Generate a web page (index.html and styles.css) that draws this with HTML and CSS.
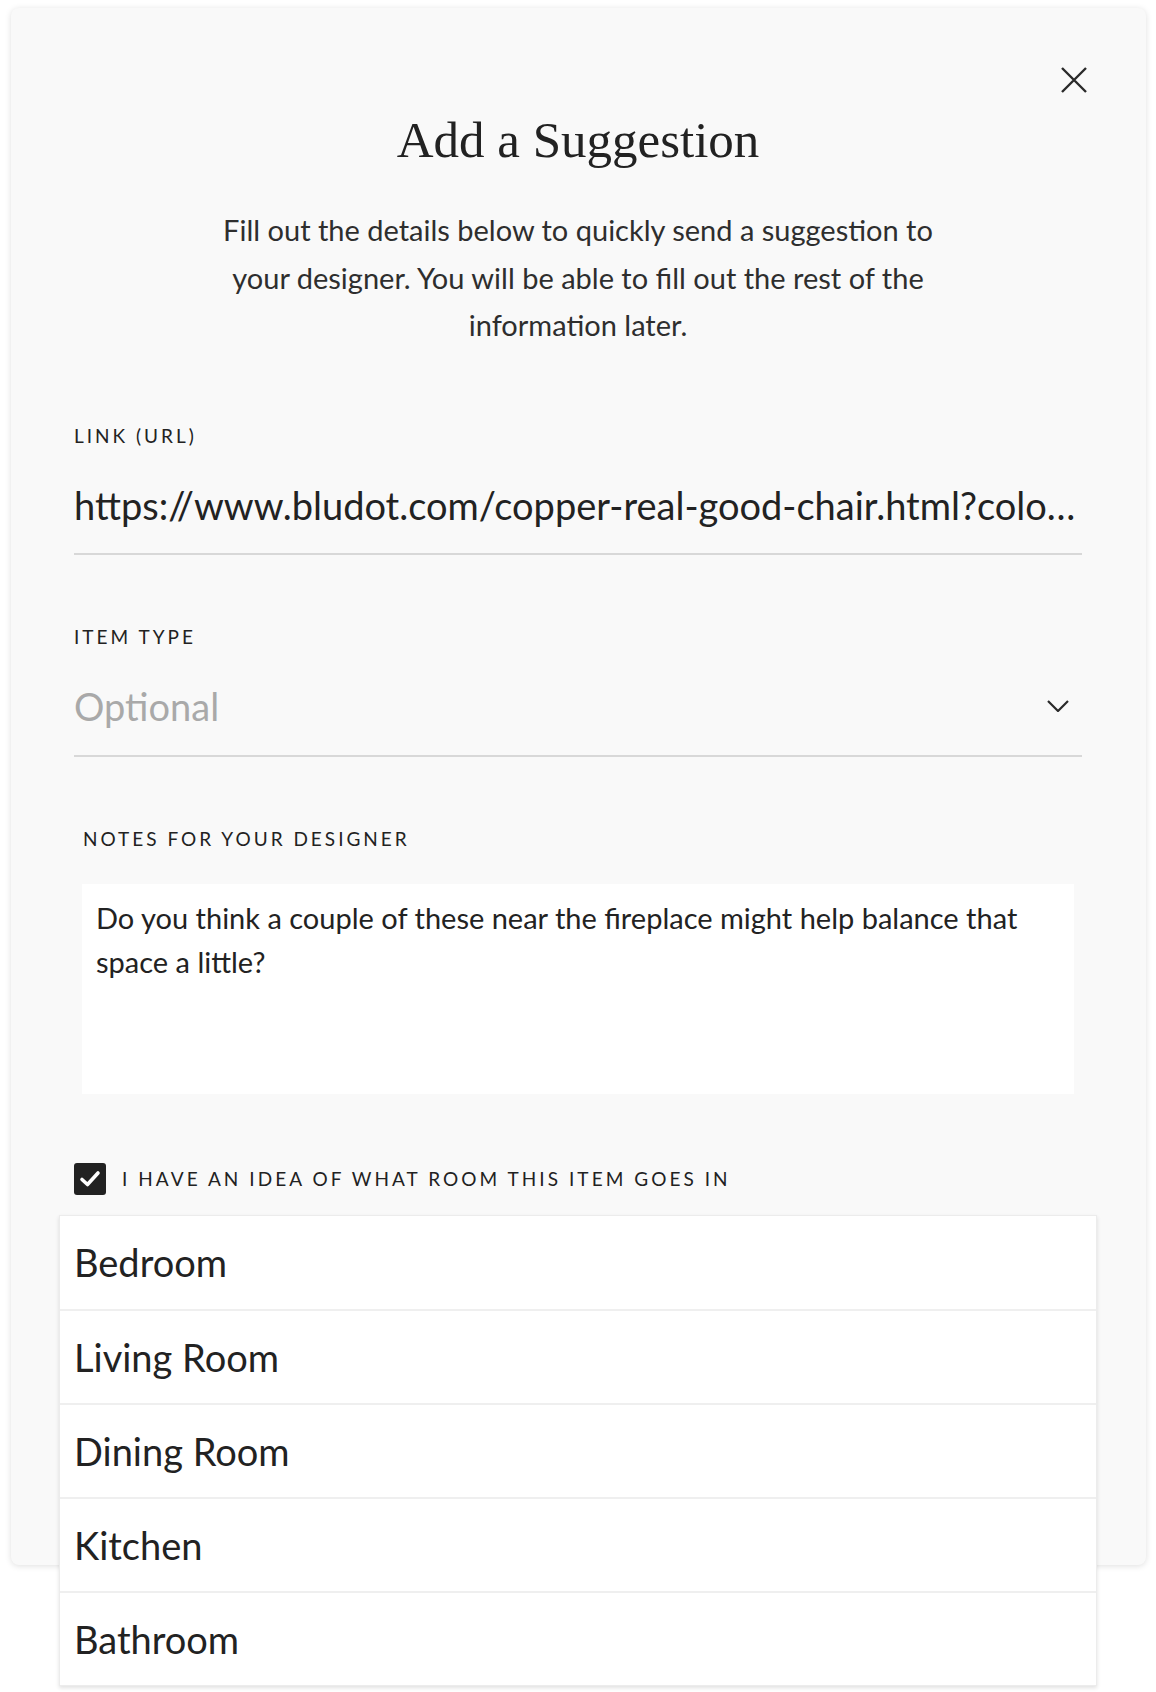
FILE: index.html
```html
<!DOCTYPE html>
<html lang="en">
<head>
<meta charset="utf-8">
<title>Add a Suggestion</title>
<link rel="stylesheet" href="styles.css">
</head>
<body>
<div class="modal">
  <button class="close" aria-label="Close">
    <svg width="26" height="26" viewBox="0 0 26 26"><path d="M1 1 L25 25 M25 1 L1 25" stroke="#2a2a2a" stroke-width="2.4" fill="none"/></svg>
  </button>
  <h1 class="title">Add a Suggestion</h1>
  <p class="intro">Fill out the details below to quickly send a suggestion to<br>your designer. You will be able to fill out the rest of the<br>information later.</p>

  <div class="field">
    <div class="label">Link (URL)</div>
    <div class="input">https://www.bludot.com/copper-real-good-chair.html?colo…</div>
  </div>

  <div class="field">
    <div class="label">Item Type</div>
    <div class="input select">
      <span class="placeholder">Optional</span>
      <svg class="chev" width="22" height="12" viewBox="0 0 22 12"><path d="M1 1 L11 11 L21 1" stroke="#2a2a2a" stroke-width="2.2" fill="none"/></svg>
    </div>
  </div>

  <div class="field notes">
    <div class="label">Notes for your designer</div>
    <div class="textarea">Do you think a couple of these near the fireplace might help balance that space a little?</div>
  </div>

  <div class="room">
    <div class="check-row">
      <span class="checkbox">
        <svg width="22" height="18" viewBox="0 0 22 18"><path d="M3 9.5 L8.5 14.5 L19 3" stroke="#fff" stroke-width="3.6" fill="none" stroke-linecap="round" stroke-linejoin="round"/></svg>
      </span>
      <span class="check-label">I have an idea of what room this item goes in</span>
    </div>
    <ul class="menu">
      <li>Bedroom</li>
      <li>Living Room</li>
      <li>Dining Room</li>
      <li>Kitchen</li>
      <li>Bathroom</li>
    </ul>
  </div>
</div>
</body>
</html>
```

FILE: styles.css
```css
* { box-sizing: border-box; }
html { min-height: 1692px; background: #fff; }
body { margin: 0; padding: 0; min-height: 1692px; background: #fff; font-family: Lato, "Noto Sans", sans-serif; color: #222; }

.modal {
  position: relative;
  margin: 8px 10px 0 11px;
  height: 1557px;
  background: #f9f9f9;
  border-radius: 8px;
  box-shadow: 0 1px 6px rgba(0,0,0,0.13);
  padding: 102px 64px 0 63px;
}

.close {
  position: absolute;
  top: 59px;
  right: 59px;
  width: 26px;
  height: 26px;
  padding: 0;
  border: 0;
  background: none;
  display: flex;
}

.title {
  margin: 0;
  font-family: "Liberation Serif", "Times New Roman", serif;
  font-weight: 400;
  font-size: 51px;
  line-height: 60px;
  text-align: center;
  color: #222;
}

.intro {
  margin: 36px 0 0;
  font-size: 29px;
  line-height: 47.5px;
  text-align: center;
  color: #2e2e2e;
}

.field { margin-top: 75px; }
.field + .field { margin-top: 70px; }

.label {
  font-size: 19px;
  line-height: 24px;
  letter-spacing: 3px;
  text-transform: uppercase;
  color: #222;
}

.input {
  margin-top: 33px;
  font-size: 38px;
  line-height: 48px;
  padding-bottom: 24px;
  border-bottom: 2px solid #d8d8d8;
  white-space: nowrap;
  overflow: hidden;
  color: #222;
}

.select {
  display: flex;
  align-items: center;
  justify-content: space-between;
  padding-bottom: 25px;
}
.placeholder { color: #a9a9a9; }
.chev { margin-right: 13px; }

.notes { margin-left: 8px; margin-right: 8px; }
.notes .label { margin-left: 1px; }

.textarea {
  margin-top: 33px;
  height: 210px;
  background: #fff;
  padding: 12px 14px;
  font-size: 29px;
  line-height: 44px;
  color: #222;
}

.room {
  position: relative;
  margin-top: 69px;
}

.check-row {
  display: flex;
  align-items: center;
  gap: 16px;
}

.checkbox {
  width: 32px;
  height: 32px;
  border-radius: 3px;
  background: #222;
  display: flex;
  align-items: center;
  justify-content: center;
}

.check-label {
  font-size: 19px;
  line-height: 24px;
  letter-spacing: 3.05px;
  text-transform: uppercase;
  color: #222;
}

.menu {
  position: absolute;
  top: calc(100% + 20px);
  left: -15px;
  right: -15px;
  margin: 0;
  padding: 0;
  list-style: none;
  background: #fff;
  border: 1px solid #ececec;
  box-shadow: 0 2px 4px rgba(0,0,0,0.12);
  z-index: 2;
}

.menu li {
  height: 94px;
  display: flex;
  align-items: center;
  padding-left: 14px;
  font-size: 38px;
  color: #222;
  border-top: 2px solid #efefef;
}
.menu li:first-child { border-top: 0; height: 93px; }
```
